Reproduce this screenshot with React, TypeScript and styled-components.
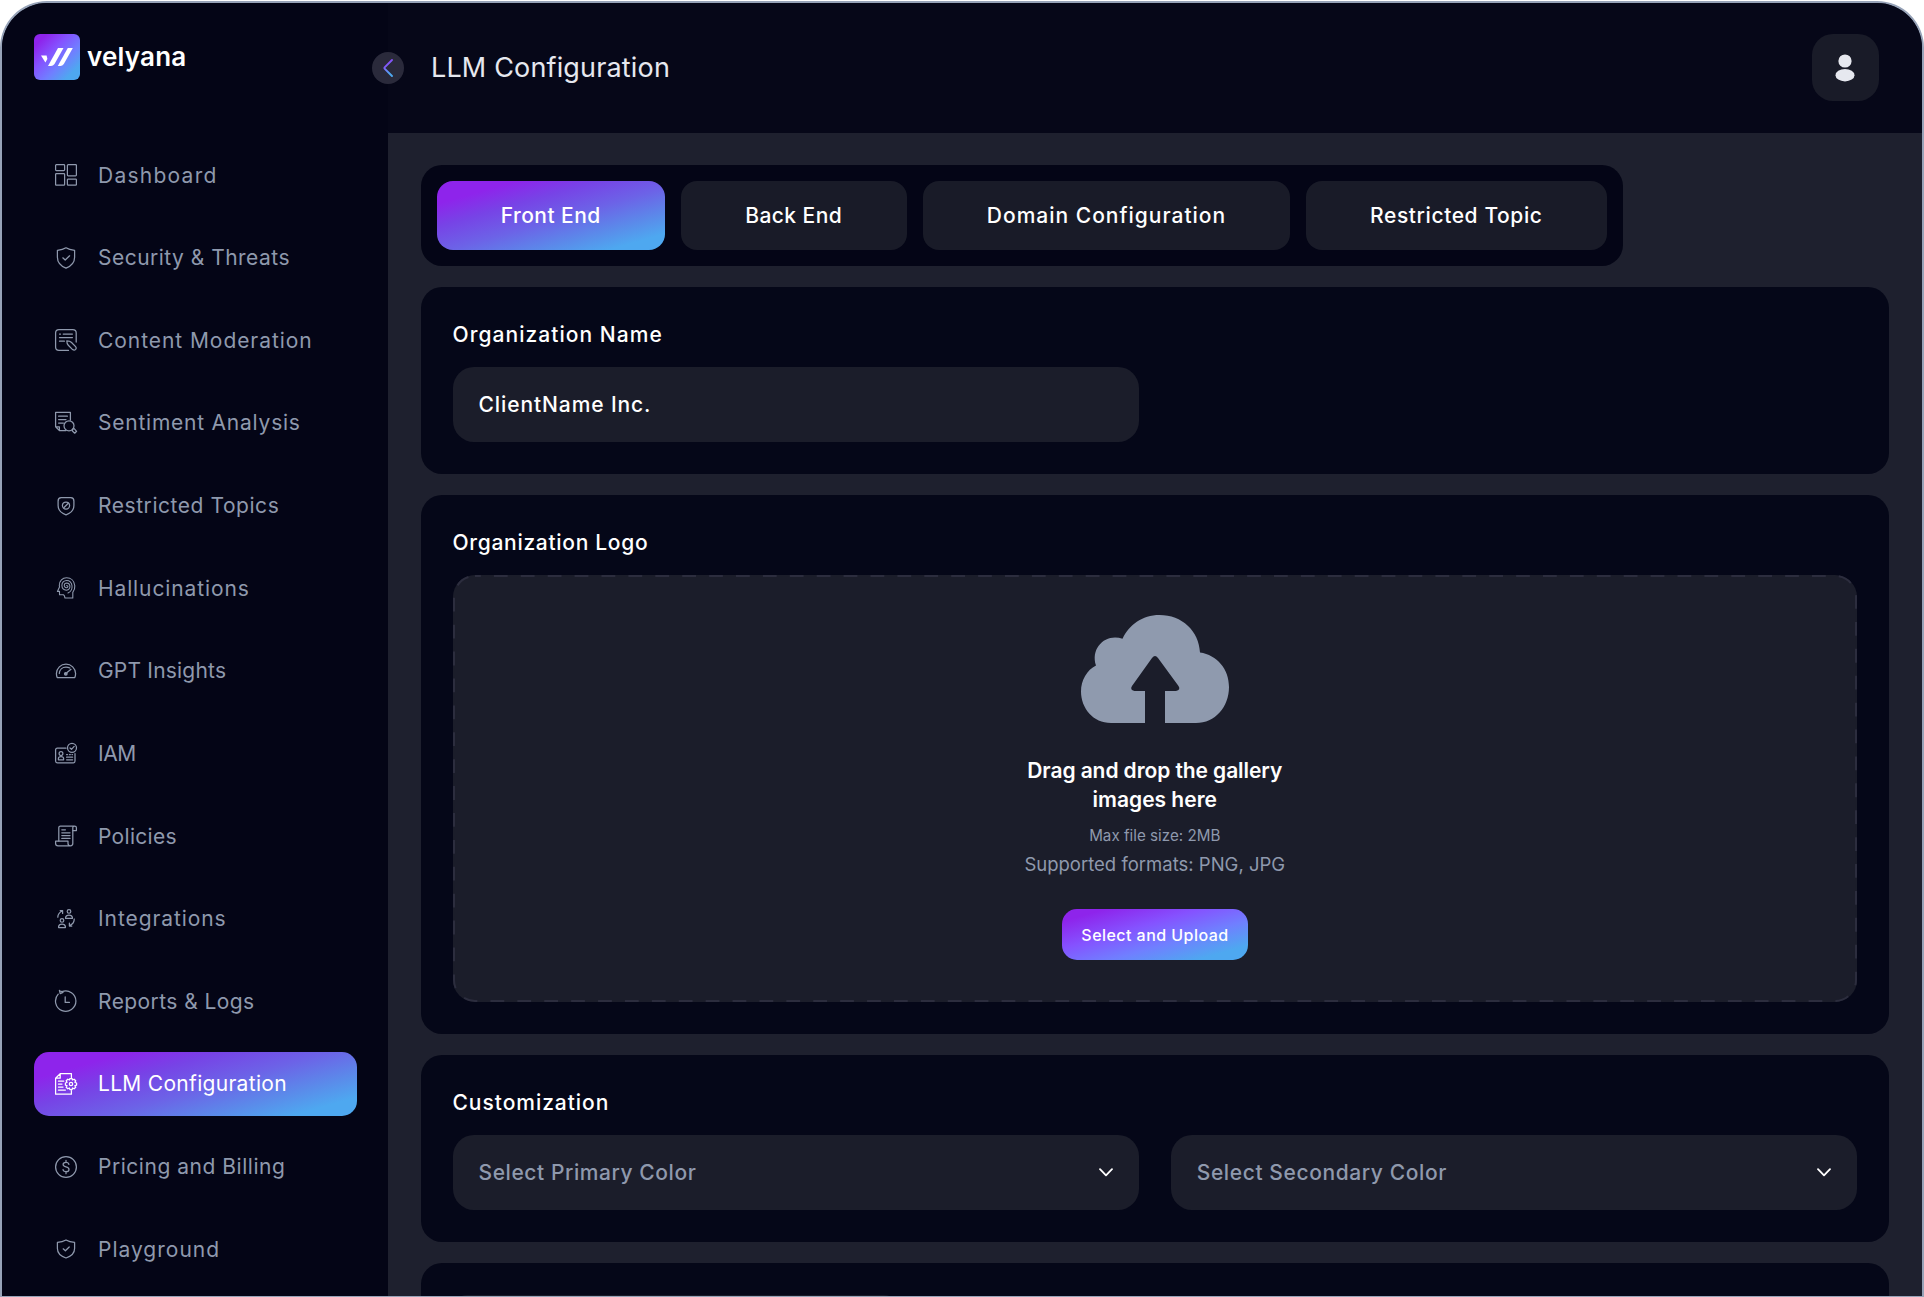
import React from 'react';
import styled, { createGlobalStyle, css } from 'styled-components';

const face = `Inter, "Noto Sans", sans-serif`;
const muted = '#8f99ad';
const brand = 'linear-gradient(164deg, #8e24eb 17%, #7743e6 34%, #6c63e7 54%, #5a8cea 74%, #4ea8f0 88%)';

const Global = createGlobalStyle`
  * { box-sizing: border-box; }
  html, body { margin: 0; background: #fff; overflow: hidden; }
  body { font-family: ${face}; }
  button, input { font: inherit; color: inherit; letter-spacing: inherit; }
`;

const Frame = styled.div`
  width: 1924px;
  height: 1296px;
  margin-top: 1px;
  display: flex;
  overflow: hidden;
  border: 2px solid #97a3b8;
  border-bottom-width: 1px;
  border-radius: 47px 47px 0 0;
  background: #1e202e;
`;

const Sidebar = styled.aside`
  width: 386px;
  flex: none;
  padding: 31px 31.5px 0 32px;
  background: #040516;
`;

const Brand = styled.div`
  height: 46px;
  display: flex;
  align-items: center;
  gap: 7px;
`;

const Mark = styled.div`
  width: 46px;
  height: 46px;
  border-radius: 6px;
  display: flex;
  background: linear-gradient(135deg, #8e24eb 14%, #8552ff 38%, #707fff 62%, #4ea8f0 84%);
`;

const Tracked = styled.span<{ $t: number }>`
  letter-spacing: ${(p) => p.$t}px;
  margin-right: ${(p) => -p.$t}px;
  white-space: nowrap;
`;

const Wordmark = styled(Tracked)`
  color: #fff;
  font-size: 26px;
  font-weight: 600;
  line-height: 30px;
`;

const Nav = styled.nav`
  margin-top: 63px;
  display: flex;
  flex-direction: column;
  gap: 18.45px;
`;

const NavItem = styled.a<{ $active?: boolean }>`
  height: 64.2px;
  flex: none;
  padding: 0 20px;
  display: flex;
  align-items: center;
  gap: 20px;
  border-radius: 15px;
  color: ${muted};
  font-size: 21px;
  ${(p) => p.$active && css`color: #fff; background: ${brand};`}
  svg { flex: none; }
`;

const Main = styled.main`
  flex: 1;
  min-width: 0;
`;

const Header = styled.header`
  height: 130px;
  padding: 0 43.5px 0 0;
  display: flex;
  align-items: center;
  background: #060718;
`;

const Toggle = styled.button`
  width: 32px;
  height: 32px;
  margin: -1px 0 0 -16px;
  padding: 0;
  border: 0;
  border-radius: 50%;
  display: flex;
  align-items: center;
  justify-content: center;
  background: #2a2a3b;
`;

const Title = styled.h1`
  flex: 1;
  margin: -1px 0 0 27px;
  color: #e6e8ef;
  font-size: 27px;
  font-weight: 400;
`;

const Avatar = styled.div`
  width: 66.5px;
  height: 66.5px;
  margin-top: -1px;
  border-radius: 21px;
  display: flex;
  align-items: center;
  justify-content: center;
  background: #191b28;
`;

const Page = styled.div`
  padding: 32px 33px 0 32.5px;
  display: flex;
  flex-direction: column;
  align-items: flex-start;
  gap: 21px;
`;

const Tabs = styled.div`
  height: 101px;
  padding: 16px;
  display: flex;
  gap: 16px;
  border-radius: 21px;
  background: #040516;
`;

const Tab = styled.button<{ $w: number; $active?: boolean }>`
  width: ${(p) => p.$w}px;
  height: 69px;
  padding: 0;
  border: 0;
  border-radius: 16px;
  color: #fff;
  font-size: 21px;
  font-weight: 500;
  background: ${(p) => (p.$active ? brand : '#191b28')};
`;

const Card = styled.section<{ $h: number }>`
  width: 100%;
  height: ${(p) => p.$h}px;
  flex: none;
  padding: 32px;
  border-radius: 21px;
  background: #050718;
`;

const Label = styled.h2`
  height: 32px;
  margin: 0 0 16px;
  color: #fff;
  font-size: 21px;
  font-weight: 500;
  line-height: 31px;
`;

const Fields = styled.div`
  display: grid;
  grid-template-columns: 1fr 1fr;
  gap: 32px;
`;

const Field = styled.div<{ $muted?: boolean }>`
  height: 75px;
  padding: 0 26px;
  display: flex;
  align-items: center;
  justify-content: space-between;
  border-radius: 21px;
  background: #1b1d2a;
  color: ${(p) => (p.$muted ? muted : '#fff')};
  font-size: 21px;
  font-weight: 500;
`;

const NextPanel = styled.div`
  width: 445px;
  height: 60px;
  border-radius: 14px;
  background: #191b28;
`;

const Dropzone = styled.div`
  height: 427px;
  padding-top: 40px;
  display: flex;
  flex-direction: column;
  align-items: center;
  border-radius: 22px;
  background: #1b1d2a;
  position: relative;
`;

const Dashes = styled.svg`
  position: absolute;
  inset: 0;
`;

const DropTitle = styled.p`
  margin: 33px 0 0;
  color: #fff;
  text-align: center;
  font-size: 21px;
  font-weight: 600;
  line-height: 29px;
`;

const Hint = styled.p<{ $size: number; $mt: number }>`
  height: 26px;
  margin: ${(p) => p.$mt}px 0 0;
  color: ${muted};
  font-size: ${(p) => p.$size}px;
  line-height: 26px;
`;

const Upload = styled.button`
  width: 185.5px;
  height: 51px;
  margin-top: 32px;
  padding: 0;
  border: 0;
  border-radius: 15px;
  color: #fff;
  font-size: 16px;
  font-weight: 500;
  background: linear-gradient(164deg, #8e24eb 12%, #8552ff 38%, #707fff 62%, #4ea8f0 86%);
`;

const Icon = ({ children }: { children: React.ReactNode }) => (
  <svg width="24" height="24" viewBox="0 0 24 24" fill="none" stroke="currentColor" strokeWidth="1.25" strokeLinecap="round" strokeLinejoin="round">
    {children}
  </svg>
);

const icons = {
  dashboard: (
    <Icon>
      <rect x="1.6" y="1.6" width="9" height="6" rx="0.8" />
      <rect x="13.4" y="1.6" width="9" height="11.2" rx="0.8" />
      <rect x="1.6" y="10.6" width="9" height="11.6" rx="0.8" />
      <rect x="13.4" y="16" width="9" height="6.2" rx="0.8" />
    </Icon>
  ),
  shield: (
    <Icon>
      <path d="M12 1.8 C9.4 3.5 6.5 4.1 3.4 4.4 V11.2 C3.4 16.4 6.8 20 12 22.2 C17.2 20 20.6 16.4 20.6 11.2 V4.4 C17.5 4.1 14.6 3.5 12 1.8 Z" />
      <path d="M8.8 11.8 L11.2 14 L15.6 9.8" />
    </Icon>
  ),
  moderation: (
    <Icon>
      <path d="M22.2 14 V5 Q22.2 1.6 18.8 1.6 H5 Q1.6 1.6 1.6 5 V19 Q1.6 22.4 5 22.4 H14.5" />
      <path d="M5.5 6 H6.5 M9.2 6 H18.4 M5.5 9.6 H18.4 M5.5 13.2 H10.4" />
      <path d="M12.8 12.8 Q16 12.8 17.3 14.2 L21.6 18.6 Q22.9 20 21.7 21.4 Q20.2 22.9 18.6 21.6 L14.3 17.2 Q12.8 15.8 12.8 12.8 Z" />
    </Icon>
  ),
  sentiment: (
    <Icon>
      <path d="M16.4 9.2 V1.4 H1.6 V15.8 L5.4 19.6 H12 M1.6 15.8 H5.4 V19.6" />
      <path d="M4.6 5.2 H13.4 M4.6 8.6 H12 M4.6 12 H9.4" />
      <circle cx="15" cy="14.8" r="5" />
      <path d="M18.7 18.2 L20.2 17.7 L22.6 20.3 L20.7 22.2 L18.2 19.8 Z" />
    </Icon>
  ),
  restricted: (
    <Icon>
      <path d="M7.2 3.7 H16.8 Q19.9 3.9 19.9 7 V11.5 C19.9 16.2 16.6 19.2 12 20.8 C7.4 19.2 4.1 16.2 4.1 11.5 V7 Q4.1 3.9 7.2 3.7 Z" />
      <circle cx="12" cy="11.6" r="3.6" />
      <path d="M9.8 13.8 L14.3 9.2" />
    </Icon>
  ),
  hallucinations: (
    <Icon>
      <path d="M18.8 22 V16.4 C20.5 14.3 21 12.2 20.8 9.8 C20.3 4.7 16.8 1.8 12.6 1.8 C8.4 1.8 5.4 5.1 5.3 9.4 L5.5 11 L3.4 15.4 H5.5 V18.8 H9.6 L10.4 19.8 L11 22 Z" strokeWidth="1.1" />
      <path d="M14 17 C17 15.6 18.4 13 18 9.6 C17.5 6.2 15.3 4.4 12.7 4.4 C9.8 4.4 7.8 6.7 7.9 9.6 C8 12.3 9.8 14.2 12.4 14.2 C15 14.1 16.2 12 15.9 9.9 C15.6 8 14.3 6.9 12.8 6.9 C11.2 7 10.2 8.1 10.3 9.6 C10.4 11 11.4 11.8 12.5 11.7 C13.5 11.6 14 10.9 13.9 10.1 L12.7 9.5" strokeWidth="1.05" />
    </Icon>
  ),
  gauge: (
    <Icon>
      <path d="M3.2 18.6 Q2.4 16.6 2.4 14.6 C2.6 9.2 6.8 5.2 12 5.2 C17.2 5.2 21.4 9.2 21.6 14.6 Q21.6 16.6 20.8 18.6 Z" />
      <path d="M5.3 14.5 C5.5 10.7 8.3 8 12 8 C13.7 8 14.7 8.3 15.9 9" />
      <circle cx="11.8" cy="14.8" r="1.3" fill="currentColor" />
      <path d="M13 13.6 L17 10.3" />
    </Icon>
  ),
  iam: (
    <Icon>
      <path d="M12 7.2 H3.4 Q1.6 7.2 1.6 9 V20 Q1.6 21.8 3.4 21.8 H19.4 Q21 21.8 21 20 V12.5" />
      <circle cx="18" cy="6.8" r="4.5" />
      <path d="M16 7 L17.5 8.4 L20.2 5.4" />
      <circle cx="7" cy="12.6" r="1.9" />
      <path d="M4.4 18.8 V17.4 Q4.4 15.5 7 15.5 Q9.6 15.5 9.6 17.4 V18.8 Z M12.6 13.5 H13.5 M15.4 13.5 H16.3 M18 13.5 H18.5 M12.6 16.2 H18.6 M12.6 18.8 H18.6" />
    </Icon>
  ),
  policies: (
    <Icon>
      <path d="M4.8 17 V3.6 Q4.8 2 6.4 2 H20.6 Q22.4 2 22.4 3.8 V6.6 H18.8 V3.6 Q18.8 2 20.6 2" />
      <path d="M18.8 6.6 V19.6 Q18.8 21.8 16.4 21.8 H4 Q1.6 21.8 1.6 19.4 V17.2 H14 V19.6 Q14 21.8 16.4 21.8" />
      <path d="M7.8 5.8 H11.4 M7.8 8.8 H16 M7.8 11.6 H16 M7.8 14.4 H16" />
    </Icon>
  ),
  integrations: (
    <Icon>
      <circle cx="15" cy="4.4" r="1.8" />
      <circle cx="8" cy="13.4" r="1.8" />
      <path d="M11.6 11.4 V10.4 Q11.9 8 15 8 Q18.1 8 18.4 10.4 V11.4 Z M4.6 20.6 V19.6 Q4.9 17.2 8 17.2 Q11.1 17.2 11.4 19.6 V20.6 Z" />
      <path d="M3.8 10.2 Q3.8 6.2 8.2 4 M8.6 6.4 V3.6 H6.2 M20.2 12 Q20.4 16.4 15.8 18.6 M15.4 16 V19 H17.8" />
    </Icon>
  ),
  reports: (
    <Icon>
      <path d="M4.2 5.2 A10.2 10.2 0 1 0 8 2.6" />
      <path d="M5.4 1.4 L6.2 4.6 L9 3.4 M6 2 L8 2.6" />
      <path d="M11.2 7.8 V13.4 H15.4" />
    </Icon>
  ),
  config: (
    <Icon>
      <path d="M17.4 5.6 V1.6 H6.2 L1.6 6.2 V22.2 H17.4 V18.6 M6.2 1.6 V6.2 H1.6" />
      <path d="M4.4 9 H9.8 M4.4 12 H8 M4.4 15 H9 M4.4 18 H11.4" />
      <circle cx="17" cy="12" r="1.7" />
      <path d="M15.9 6.5 H18.1 L18.5 8 L20.1 7.2 L21.7 8.8 L20.9 10.4 L22.6 11 V13.1 L20.9 13.6 L21.7 15.2 L20.1 16.8 L18.5 16 L18.1 17.6 H15.9 L15.4 16 L13.8 16.8 L12.2 15.2 L13 13.6 L11.4 13.1 V11 L13 10.4 L12.2 8.8 L13.8 7.2 L15.4 8 Z" />
    </Icon>
  ),
  pricing: (
    <Icon>
      <circle cx="12" cy="12" r="10.4" />
      <path d="M14.9 9.4 C14.6 7.9 13.5 7.4 12 7.4 C10.2 7.4 9.1 8.2 9.1 9.6 C9.1 11 10.1 11.5 12 11.9 C13.9 12.3 15 12.9 15 14.4 C15 15.9 13.8 16.7 12 16.7 C10.3 16.7 9.2 16 9 14.5 M12 5.4 V7.4 M12 16.7 V18.7" />
    </Icon>
  ),
  playground: (
    <Icon>
      <path d="M12 3 C9.2 4.6 6.2 5.2 3.4 5.4 V11.6 C3.4 16.2 7 19.4 12 21 C17 19.4 20.6 16.2 20.6 11.6 V5.4 C17.8 5.2 14.8 4.6 12 3 Z" />
      <path d="M9.2 11.8 L11.4 13.8 L15.2 10" />
    </Icon>
  ),
};

const items: { icon: keyof typeof icons; text: string; t: number; active?: boolean }[] = [
  { icon: 'dashboard', text: 'Dashboard', t: 1.25 },
  { icon: 'shield', text: 'Security & Threats', t: 0.48 },
  { icon: 'moderation', text: 'Content Moderation', t: 0.94 },
  { icon: 'sentiment', text: 'Sentiment Analysis', t: 0.77 },
  { icon: 'restricted', text: 'Restricted Topics', t: 0.55 },
  { icon: 'hallucinations', text: 'Hallucinations', t: 0.88 },
  { icon: 'gauge', text: 'GPT Insights', t: 0.2 },
  { icon: 'iam', text: 'IAM', t: -0.5 },
  { icon: 'policies', text: 'Policies', t: 0.3 },
  { icon: 'integrations', text: 'Integrations', t: 0.92 },
  { icon: 'reports', text: 'Reports & Logs', t: 0.42 },
  { icon: 'config', text: 'LLM Configuration', t: 0.3, active: true },
  { icon: 'pricing', text: 'Pricing and Billing', t: 0.53 },
  { icon: 'playground', text: 'Playground', t: 1 },
];

const tabs = [
  { text: 'Front End', w: 228, t: 0.46, active: true },
  { text: 'Back End', w: 226, t: 0.45 },
  { text: 'Domain Configuration', w: 367, t: 1 },
  { text: 'Restricted Topic', w: 301, t: 0.6 },
];

const Chevron = () => (
  <svg width="14" height="9" viewBox="0 0 14 9" fill="none" stroke="#fff" strokeWidth="1.8" strokeLinecap="round" strokeLinejoin="round">
    <path d="M1 1.2 L7 7.4 L13 1.2" />
  </svg>
);

export default function App() {
  return (
    <>
      <Global />
      <Frame>
        <Sidebar>
          <Brand>
            <Mark>
              <svg width="46" height="46" viewBox="0 0 46 46" fill="#fff">
                <path d="M7 21.5 H12.6 L13.4 25 L11.4 28.5 Z" />
                <path d="M24 14 H29.5 L20.5 30 Q19 32 17 32 H14 Z" />
                <path d="M33.8 14 H38.8 L29.8 30 Q28.4 32 26.4 32 H23.8 Z" />
              </svg>
            </Mark>
            <Wordmark $t={0.2}>velyana</Wordmark>
          </Brand>
          <Nav>
            {items.map((i) => (
              <NavItem key={i.text} $active={i.active}>
                {icons[i.icon]}
                <Tracked $t={i.t}>{i.text}</Tracked>
              </NavItem>
            ))}
          </Nav>
        </Sidebar>
        <Main>
          <Header>
            <Toggle aria-label="Collapse">
              <svg width="12" height="20" viewBox="0 0 12 20" fill="none">
                <defs>
                  <linearGradient id="arrow" x1="0" y1="0" x2="0.4" y2="1">
                    <stop offset="0.2" stopColor="#9038f5" />
                    <stop offset="0.6" stopColor="#707fff" />
                    <stop offset="1" stopColor="#4ea8f0" />
                  </linearGradient>
                </defs>
                <path d="M10 2 L2.6 9.4 Q2 10 2.6 10.6 L10 18" stroke="url(#arrow)" strokeWidth="1.9" strokeLinecap="round" />
              </svg>
            </Toggle>
            <Title><Tracked $t={0.16}>LLM Configuration</Tracked></Title>
            <Avatar>
              <svg width="20" height="28" viewBox="0 0 20 28" fill="#e6e8ef">
                <circle cx="10" cy="7" r="6.6" />
                <ellipse cx="10" cy="21.2" rx="9.5" ry="6.2" />
              </svg>
            </Avatar>
          </Header>
          <Page>
            <Tabs>
              {tabs.map((t) => (
                <Tab key={t.text} $w={t.w} $active={t.active}><Tracked $t={t.t}>{t.text}</Tracked></Tab>
              ))}
            </Tabs>
            <Card $h={187}>
              <Label><Tracked $t={1.05}>Organization Name</Tracked></Label>
              <Fields>
                <Field><Tracked $t={0.9}>ClientName Inc.</Tracked></Field>
              </Fields>
            </Card>
            <Card $h={539}>
              <Label><Tracked $t={0.7}>Organization Logo</Tracked></Label>
              <Dropzone>
                <Dashes width="100%" height="100%">
                  <rect x="1" y="1" width="1402" height="425" rx="21" fill="none" stroke="#2c2d3e" strokeWidth="2" strokeDasharray="13.8 13.1" strokeDashoffset="8" />
                </Dashes>
                <svg width="148" height="108" viewBox="0 0 148 108">
                  <path fill="#8f9aae" d="M30 108 C12 108 0 93 0 76.5 C0 65 6 55 15 50.5 C10 35 21 22.5 34 22.5 Q38 22.5 41.5 23.8 C48 10 61 0 78.5 0 C101 0 118 16 119 37.5 C136 40 148 54 148 72 C148 92 134 108 115 108 H84 V76 H95 Q100 75 97.5 71 L77 43 Q74 39 71 43 L51 71 Q48.500 75 53.500 76 H64 V108 Z" />
                </svg>
                <DropTitle>
                  <Tracked $t={-0.08}>Drag and drop the gallery</Tracked><br />
                  <Tracked $t={0}>images here</Tracked>
                </DropTitle>
                <Hint $size={15.2} $mt={9}><Tracked $t={0}>Max file size: 2MB</Tracked></Hint>
                <Hint $size={18.5} $mt={2}><Tracked $t={0}>Supported formats: PNG, JPG</Tracked></Hint>
                <Upload><Tracked $t={0.45}>Select and Upload</Tracked></Upload>
              </Dropzone>
            </Card>
            <Card $h={187}>
              <Label><Tracked $t={0.96}>Customization</Tracked></Label>
              <Fields>
                <Field $muted><Tracked $t={0.57}>Select Primary Color</Tracked><Chevron /></Field>
                <Field $muted><Tracked $t={0.6}>Select Secondary Color</Tracked><Chevron /></Field>
              </Fields>
            </Card>
            <Card $h={187}>
              <NextPanel />
            </Card>
          </Page>
        </Main>
      </Frame>
    </>
  );
}
